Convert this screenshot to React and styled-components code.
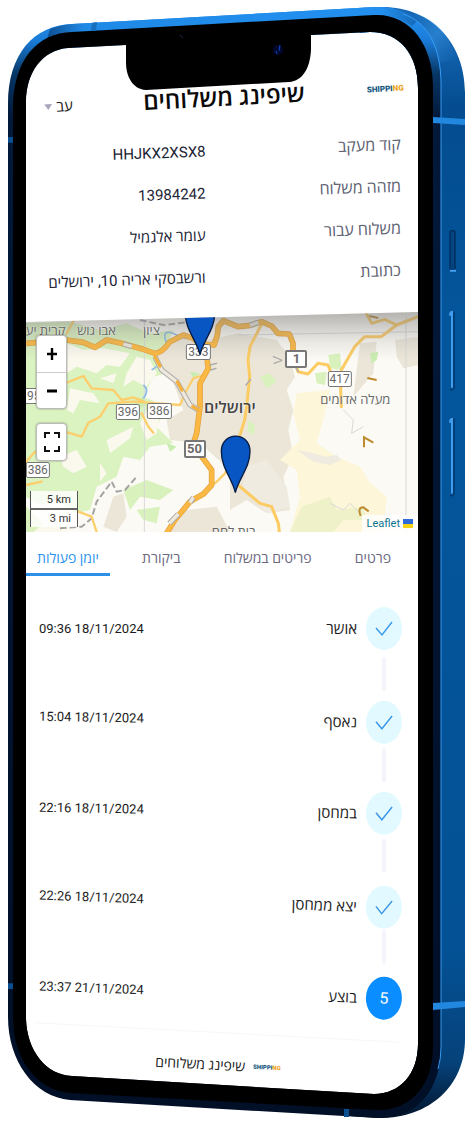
import React from "react";
import styled, { createGlobalStyle } from "styled-components";

const GlobalStyle = createGlobalStyle`
  * { box-sizing: border-box; }
  body { margin: 0; background: #fff; }
  button, select { font: inherit; }
`;

const textFont = `Roboto, "Open Sans", "DejaVu Sans", sans-serif`;

const Phone = styled.main`
  position: relative;
  display: flex;
  flex-direction: column;
  width: 100%;
  padding: 83px 58px 31px 26px;
  font-family: ${textFont};
  color: #1c1c22;
`;

const Frame = styled.svg`
  position: absolute;
  inset: 0;
  width: 100%;
  height: 100%;
  pointer-events: none;
  z-index: 5;
`;

const Header = styled.header`
  padding-bottom: 14px;
`;

const TitleBar = styled.div`
  display: grid;
  grid-template-columns: 1fr auto 1fr;
  align-items: center;
  height: 30px;
  margin-bottom: 17px;
  padding: 0 14px 0 18px;
  transform: rotate(-3deg);
`;

const Language = styled.label`
  display: flex;
  align-items: center;
  gap: 4px;
`;

const LanguageSelect = styled.select`
  appearance: none;
  border: 0;
  padding: 0;
  background: transparent;
  color: #222;
  font-size: 15px;
  line-height: 20px;
`;

const Title = styled.h1`
  margin: 0;
  color: #0a0a0a;
  font-size: 24px;
  line-height: 30px;
  font-weight: 600;
  white-space: nowrap;
`;

const Logo = styled.span`
  justify-self: end;
  direction: ltr;
  color: #14587f;
  font-size: ${(p) => (p.$small ? 6 : 8)}px;
  line-height: 12px;
  font-weight: 900;
  b { color: #f0a325; font-weight: 900; }
`;

const Details = styled.dl`
  margin: 0;
  direction: rtl;
`;

const Detail = styled.div`
  display: grid;
  grid-template-columns: 54% 1fr;
  align-items: center;
  height: 42px;
  padding: 0 17px 0 13px;
  transform: rotate(-2deg);
`;

const DetailName = styled.dt`
  color: #5d6172;
  font-size: 16px;
  line-height: 22px;
`;

const DetailValue = styled.dd`
  margin: 0;
  color: #1a2233;
  font-size: 15px;
  line-height: 22px;
  white-space: nowrap;
`;

const Map = styled.section`
  position: relative;
  height: 220px;
  overflow: hidden;
  background: #f8f5ec;
  clip-path: polygon(0 10px, 100% 0, 100% 100%, 0 100%);
`;

const MapArt = styled.svg`
  position: absolute;
  inset: 0;
  width: 100%;
  height: 100%;
`;

const Place = styled.span`
  position: absolute;
  left: ${(p) => p.$x}%;
  top: ${(p) => p.$y}px;
  transform: translate(-50%, -50%);
  color: ${(p) => (p.$big ? "#444" : "#666")};
  font-size: ${(p) => (p.$big ? 16 : 13)}px;
  line-height: 16px;
  font-weight: ${(p) => (p.$big ? 600 : 500)};
  white-space: nowrap;
  text-shadow: 0 0 2px #fff;
`;

const Shield = styled.span`
  position: absolute;
  left: ${(p) => p.$x}%;
  top: ${(p) => p.$y}px;
  transform: translate(-50%, -50%);
  min-width: ${(p) => (p.$major ? 22 : 20)}px;
  padding: 0 1px;
  border: ${(p) => (p.$major ? 2 : 1)}px solid #777;
  border-radius: 2px;
  background: #fff;
  color: #6a6a6a;
  font-size: ${(p) => (p.$major ? 13 : 12)}px;
  line-height: 14px;
  font-weight: ${(p) => (p.$major ? 700 : 400)};
  text-align: center;
`;

const Controls = styled.div`
  position: absolute;
  top: 23px;
  left: 10px;
  display: flex;
  flex-direction: column;
  gap: 14px;
`;

const ControlGroup = styled.div`
  display: flex;
  flex-direction: column;
  width: 31px;
  border: 1px solid #bbb;
  border-radius: 4px;
  background: #fff;
  box-shadow: 0 0 1px 1px #0002;
`;

const ControlButton = styled.button`
  display: grid;
  place-items: center;
  width: 100%;
  height: 36px;
  padding: 0;
  border: 0;
  background: transparent;
  color: #000;
  & + & { border-top: 1px solid #ccc; }
`;

const Scale = styled.div`
  position: absolute;
  left: 4px;
  bottom: 5px;
  width: 48px;
  border: 1px solid #555;
  border-width: 0 1px;
  background: #fffc;
  color: #333;
  font-size: 11px;
  line-height: 17px;
  text-align: right;
  div { padding-right: 6px; }
  div + div { border-top: 2px solid #666; }
`;

const Attribution = styled.a`
  position: absolute;
  right: 0;
  bottom: 0;
  display: flex;
  align-items: center;
  gap: 3px;
  padding: 0 5px;
  background: #fffc;
  color: #0b7490;
  font-size: 11px;
  line-height: 17px;
  text-decoration: none;
`;

const Tabs = styled.nav`
  display: flex;
  justify-content: space-between;
  height: 44px;
  padding-right: 16px;
  direction: rtl;
`;

const Tab = styled.button`
  height: 44px;
  padding: 16px 11px 5px;
  border: 0;
  border-bottom: 3px solid ${(p) => (p.$active ? "#2c8fe8" : "transparent")};
  background: transparent;
  color: ${(p) => (p.$active ? "#2c93ee" : "#6b6880")};
  font-size: 14px;
  line-height: 20px;
  font-weight: ${(p) => (p.$active ? 500 : 400)};
  white-space: nowrap;
`;

const Timeline = styled.ol`
  margin: 31px 0 0;
  padding: 0;
  list-style: none;
  direction: rtl;
`;

const Step = styled.li`
  &:not(:last-child)::after {
    content: "";
    display: block;
    width: 4px;
    height: 34px;
    margin: 7px 32px 7px 0;
    border-radius: 2px;
    background: #f5f4fd;
  }
`;

const StepRow = styled.div`
  display: flex;
  align-items: center;
  gap: 9px;
  height: 43px;
  padding: 0 16px 0 13px;
  transform: rotate(${(p) => p.$tilt}deg);
`;

const Badge = styled.span`
  display: grid;
  place-items: center;
  width: 36px;
  height: 43px;
  border-radius: 50%;
  background: ${(p) => (p.$current ? "#0a8dff" : "#e2faff")};
  color: #fff;
  font-size: 16px;
`;

const StepName = styled.span`
  flex: 1;
  font-size: 15px;
  line-height: 22px;
`;

const StepTime = styled.time`
  direction: ltr;
  font-size: 13px;
  line-height: 22px;
`;

const Footer = styled.footer`
  margin: 18px 16px 0 8px;
`;

const FooterRule = styled.hr`
  margin: 0;
  border: 0;
  border-top: 1px solid #f7f7f8;
  transform: rotate(3deg);
`;

const FooterBrand = styled.div`
  display: flex;
  align-items: center;
  justify-content: center;
  gap: 8px;
  height: 64px;
  direction: rtl;
  font-size: 14px;
  line-height: 22px;
  transform: rotate(3deg);
`;

const details = [
  { name: "קוד מעקב", value: "HHJKX2XSX8" },
  { name: "מזהה משלוח", value: "13984242" },
  { name: "משלוח עבור", value: "עומר אלגמיל" },
  { name: "כתובת", value: "ורשבסקי אריה 10, ירושלים" },
];

const places = [
  { text: "קרית יע", x: 5, y: 19 },
  { text: "אבו גוש", x: 18, y: 19 },
  { text: "ציון", x: 32, y: 19 },
  { text: "ירושלים", x: 52, y: 96, big: true },
  { text: "מעלה אדומים", x: 84, y: 88 },
  { text: "בית לחם", x: 53, y: 220 },
];

const shields = [
  { text: "333", x: 44, y: 40 },
  { text: "1", x: 69, y: 47, major: true },
  { text: "417", x: 80, y: 67 },
  { text: "95", x: 2, y: 84 },
  { text: "396", x: 26, y: 100 },
  { text: "386", x: 34, y: 99 },
  { text: "50", x: 43, y: 137, major: true },
  { text: "386", x: 3, y: 158 },
];

const steps = [
  { name: "אושר", time: "09:36 18/11/2024", tilt: 0 },
  { name: "נאסף", time: "15:04 18/11/2024", tilt: 1 },
  { name: "במחסן", time: "22:16 18/11/2024", tilt: 1 },
  { name: "יצא ממחסן", time: "22:26 18/11/2024", tilt: 2 },
  { name: "בוצע", time: "23:37 21/11/2024", tilt: 2, current: true },
];

const tabs = ["פרטים", "פריטים במשלוח", "ביקורת", "יומן פעולות"];

function Brand({ small }) {
  return <Logo $small={small}>SHIPPI<b>NG</b></Logo>;
}

function PhoneFrame() {
  return (
    <Frame viewBox="0 0 476 1129" preserveAspectRatio="none" aria-hidden="true">
      <defs>
        <linearGradient id="side" x1="0" y1="0" x2="0" y2="1">
          <stop offset="0" stopColor="#1668b5" />
          <stop offset=".05" stopColor="#0e5ca6" />
          <stop offset=".09" stopColor="#044c8f" />
          <stop offset=".3" stopColor="#03569c" />
          <stop offset=".85" stopColor="#045195" />
          <stop offset=".95" stopColor="#06427a" />
          <stop offset="1" stopColor="#02152c" />
        </linearGradient>
        <linearGradient id="rim" x1="0" y1="0" x2="0" y2="1">
          <stop offset="0" stopColor="#2693f2" />
          <stop offset=".03" stopColor="#1a7cd8" />
          <stop offset=".06" stopColor="#073766" />
          <stop offset=".1" stopColor="#02193a" />
          <stop offset="1" stopColor="#010f27" />
        </linearGradient>
        <linearGradient id="top" x1="0" y1="0" x2="1" y2="0">
          <stop offset="0" stopColor="#0d4f92" />
          <stop offset=".1" stopColor="#1f89e6" />
          <stop offset=".9" stopColor="#2390f0" />
          <stop offset="1" stopColor="#1668b5" />
        </linearGradient>
        <linearGradient id="shine" x1="0" y1="0" x2="1" y2="1">
          <stop offset="0" stopColor="#2d96ee" stopOpacity="0" />
          <stop offset=".5" stopColor="#3d9eed" stopOpacity=".5" />
          <stop offset="1" stopColor="#2d86d6" stopOpacity="0" />
        </linearGradient>
      </defs>
      <path fill="url(#side)" fillRule="evenodd" d="M360 8L378 7C432 5 465 44 465 92V1040C465 1088 428 1120 378 1119L350 1117L350 1095L378 1095C400 1095 418 1075 418 1045V88C418 55 400 32 370 32L360 33Z" />
      <path fill="url(#shine)" d="M416 13Q446 24 458 60L440 62Q432 34 408 16Z" />
      <path fill="url(#rim)" fillRule="evenodd" d="M8 104C8 54 34 25 72 24L375 7C418 5 441 40 441 85V1048C441 1092 416 1120 378 1119L70 1101C34 1098 8 1062 8 1018ZM26 102V1020C27 1052 46 1076 72 1077L374 1095C400 1095 418 1075 418 1045V88C418 55 400 32 370 32L68 48C42 50 26 73 26 102Z" />
      <path fill="url(#top)" d="M50 29Q60 25 72 24L375 7Q400 6 418 20L412 26Q396 14 374 15L72 32Q60 33 47 39Z" />
      <path fill="#000" fillRule="evenodd" d="M13 106C14 60 37 33 72 32L374 15C410 13 433 45 433 86V1047C433 1086 411 1112 377 1111L70 1094C36 1091 13 1060 13 1018ZM26 102V1020C27 1052 46 1076 72 1077L374 1095C400 1095 418 1075 418 1045V88C418 55 400 32 370 32L311 35V50C310 68 303 81 289 82L146 90C132 89 126 76 126 62V45L68 48C42 50 26 73 26 102Z" />
      <path fill="none" stroke="#369bf5" strokeWidth="1" d="M403 14C428 22 441 48 441 84V1048Q441 1060 438 1070" />
      <path fill="#2287df" d="M433 117L465 119V125L433 123ZM433 1004L465 1002V1008L433 1011Z" />
      <path fill="#0a4f8f" d="M8 137H13V143H8ZM8 984H13V990H8ZM344 1110H349V1118H344Z" />
      <path fill="#176fbc" d="M92 23L97 22L96 31H91Z" />
      <g fill="none">
        <rect x="450" y="231" width="5" height="39" rx="1" fill="#034583" stroke="#012248" />
        <path stroke="#44a0f0" strokeWidth="2" d="M450 271H456" />
        <path stroke="#022b58" d="M450 313Q450 311 452 311M454 312V389Q453 391 450 390M450 420Q450 418 452 418M454 419V495Q453 497 450 496" />
        <path stroke="#419cec" strokeWidth="2" d="M450 316Q450 312 452 312V388M450 423Q450 419 452 419V494" />
      </g>
      <circle cx="278" cy="50" r="5" fill="#02072e" />
      <path stroke="#0949c5" strokeWidth="1" d="M280 45L279 51M276 51L277 54" />
      <path stroke="#1d2a48" strokeWidth="1" d="M180 35L183 38" />
    </Frame>
  );
}

const highway = "M78 100L200 90L250 97L285 112L320 90L365 100L430 118L465 130Q485 130 510 95L550 75L580 85L600 102L642 105L652 75L655 50L670 32L714 50L750 46L785 35L815 48L834 70L868 72L879 100L879 125M622 155L625 175L600 220L600 290L590 370L580 400L605 440L635 480L635 525L610 552L570 575L525 630L502 666";
const tunnels = "M465 140L485 180L530 215L570 285L595 300M370 102L395 109M508 640L535 612M570 578L580 562M750 46L775 37";

function MapDrawing() {
  return (
    <MapArt viewBox="78 6 1176 660" preserveAspectRatio="none" aria-hidden="true">
      <defs>
        <linearGradient id="fade" x1="0" y1="0" x2="0" y2="1">
          <stop offset="0" stopColor="#777" stopOpacity=".55" />
          <stop offset=".14" stopColor="#888" stopOpacity=".15" />
          <stop offset=".22" stopColor="#999" stopOpacity="0" />
        </linearGradient>
      </defs>
      <rect x="78" y="6" width="1176" height="660" fill="#fcfaf4" />
      <path fill="#dbf2c1" d="M78 40L210 35L300 60L380 40L450 70L520 60L500 110L540 180L460 200L430 260L500 290L470 350L520 400L450 410L420 450L370 440L350 500L290 530L270 600L180 620L78 560Z" />
      <path fill="#fbf9ee" d="M200 100L250 120L310 115L390 130L360 170L320 165L290 190L230 170L200 190ZM210 235L280 250L300 280L240 270L220 310L200 300ZM300 205L350 190L340 220ZM180 440L230 420L260 470L220 490L190 470ZM320 390L400 350L390 385L330 430ZM300 460L320 490L300 515ZM110 590L170 570L220 600L200 666L78 666V620ZM410 140L450 150L470 190L440 230L400 210L370 230L380 190ZM440 300L480 310L470 370L440 390L420 340Z" />
      <path fill="#d9f1bd" d="M78 590L130 640L100 666H78ZM370 540L440 510L520 540L480 570L420 560L390 600ZM410 600L480 590L470 640L430 630Z" />
      <path fill="#ece6d9" d="M520 80L600 95L714 70L830 90L870 140L885 200L860 240L880 300L865 360L880 440L850 500L870 600L800 610L740 570L690 600L690 480L600 400L510 390L500 330L550 300L520 220L470 140ZM340 560L370 550L380 620L350 666L310 650ZM560 600L650 590L690 666H510ZM1185 90L1254 80V165L1210 175L1190 140ZM1080 100L1130 95L1120 190L1060 260Z" />
      <path fill="#fdf6d8" d="M890 250L990 240L970 330L950 400L1010 440L1080 470L1110 520L1160 560L1150 666H870L900 560L890 480L840 450L900 390L880 310Z" />
      <path fill="#f0ebe0" d="M740 470L800 450L860 530L870 590L800 610L730 530ZM890 420L940 430L975 440L1010 435L1025 450L990 465L940 455Z" />
      <path fill="#d9f2bd" d="M780 200L810 190L830 215L800 235ZM745 330L765 345L762 375L742 365ZM985 135L1020 130L1025 180L990 175ZM945 190L980 185L975 225L950 220Z" />
      <path fill="#eff2c8" d="M905 590L990 560L1010 600L1090 590L1100 630L1030 630L1000 666H870Z" />
      <path fill="#c9edb0" d="M400 275L430 260L440 285L420 295ZM1110 130L1135 125L1130 150L1115 160ZM500 400L530 410L510 425ZM570 185L600 190L580 205Z" />
      <g fill="none" stroke="#d8d8d8" strokeWidth="3">
        <path d="M433 30V666M1218 20V666M714 75L1254 65" />
        <path d="M1030 300L1060 330L1055 370L1090 350M990 580L1030 600L1050 580L1080 610" />
      </g>
      <path fill="none" stroke="#8bbcea" strokeWidth="5" d="M500 100Q480 50 530 75T590 65M430 225Q450 240 430 265M455 180L470 170" />
      <path fill="none" stroke="#a3a3a3" strokeWidth="6" strokeDasharray="20 9" d="M180 655L245 650L275 625L290 575L335 515L350 545L375 540L410 500M420 30L490 45L560 37" />
      <g fill="none" strokeLinejoin="round" strokeLinecap="round">
        <path stroke="#fccf6c" strokeWidth="7" d="M190 222L250 198L275 235L340 240L365 270L400 262L432 275M195 365L245 380L265 338L300 320L325 280L400 275L540 285L560 240L580 205L612 195M425 310L445 350L460 368M78 455L105 425M78 525L125 515M235 605L275 620L290 666M200 70L222 30M645 520L675 490L685 470" />
        <path stroke="#fccb62" strokeWidth="9" d="M786 40L750 110L744 150L749 200L740 290L734 330L720 375M714 525L780 580L815 590L835 640L838 666M1024 290L1022 240L1024 180L1064 110L1094 80L1144 80L1190 45L1254 20M1099 10L1115 40L1154 28L1190 45M879 130L894 185L924 192L954 160L984 165L1000 205" />
        <path stroke="#e0a03e" strokeWidth="17" d={highway} />
        <path stroke="#fbb842" strokeWidth="13" d={highway} />
        <path stroke="#aaa" strokeWidth="16" strokeLinecap="butt" d={tunnels} />
        <path stroke="#eee9dc" strokeWidth="10" strokeLinecap="butt" d={tunnels} />
        <path stroke="#f5b13c" strokeWidth="10" d="M465 140L480 168M532 216L546 240M578 290L595 300" />
        <path stroke="#aaa" strokeWidth="4" d="M630 165L650 160M632 180L648 175M820 140L845 150M822 160L845 152M738 225L752 208M885 170L895 185" />
      </g>
      <path fill="none" stroke="#bd8a2f" strokeWidth="6" d="M1102 204L1130 210M1092 412V382L1120 398M1082 618Q1072 592 1090 592L1106 604M1108 18L1135 24" />
      <rect x="78" y="6" width="1176" height="660" fill="url(#fade)" />
    </MapArt>
  );
}

function MapPins() {
  return (
    <MapArt viewBox="78 6 1176 660" preserveAspectRatio="none" aria-hidden="true">
      <g fill="#0756c4" stroke="#071b40" strokeWidth="4">
        <path d="M600 134C590 90 556 60 556 10C556-45 644-45 644 10C644 60 610 90 600 134Z" />
        <path d="M706 548C696 504 664 474 664 424C664 363 750 363 750 424C750 474 716 504 706 548Z" />
      </g>
    </MapArt>
  );
}

export default function App() {
  return (
    <Phone lang="he">
      <GlobalStyle />
      <Header>
        <TitleBar>
          <Language>
            <svg width="8" height="6" viewBox="0 0 8 6" aria-hidden="true"><path d="M0 0H8L4 6Z" fill="#aaa6bd" /></svg>
            <LanguageSelect aria-label="שפה" defaultValue="he"><option value="he">עב</option></LanguageSelect>
          </Language>
          <Title dir="rtl">שיפינג משלוחים</Title>
          <Brand />
        </TitleBar>
        <Details>
          {details.map((d) => (
            <Detail key={d.name}>
              <DetailName>{d.name}</DetailName>
              <DetailValue>{d.value}</DetailValue>
            </Detail>
          ))}
        </Details>
      </Header>
      <Map aria-label="מפה">
        <MapDrawing />
        {places.map((p) => <Place key={p.text} dir="rtl" $x={p.x} $y={p.y} $big={p.big}>{p.text}</Place>)}
        {shields.map((s) => <Shield key={s.text + s.x} $x={s.x} $y={s.y} $major={s.major}>{s.text}</Shield>)}
        <MapPins />
        <Controls>
          <ControlGroup>
            <ControlButton aria-label="הגדלה">
              <svg width="12" height="14" viewBox="0 0 12 14"><path d="M6 1V13M1 7H11" stroke="#000" strokeWidth="2.4" /></svg>
            </ControlButton>
            <ControlButton aria-label="הקטנה">
              <svg width="12" height="14" viewBox="0 0 12 14"><path d="M1 7H11" stroke="#000" strokeWidth="2.8" /></svg>
            </ControlButton>
          </ControlGroup>
          <ControlGroup>
            <ControlButton aria-label="מסך מלא">
              <svg width="16" height="20" viewBox="0 0 16 20"><path d="M1 6V1H6M10 1H15V6M15 14V19H10M6 19H1V14" fill="none" stroke="#111" strokeWidth="2" /></svg>
            </ControlButton>
          </ControlGroup>
        </Controls>
        <Scale><div>5 km</div><div>3 mi</div></Scale>
        <Attribution href="#leaflet">
          Leaflet
          <svg width="10" height="9" viewBox="0 0 10 9" aria-hidden="true"><path fill="#2f6ad9" d="M0 0H10V5H0Z" /><path fill="#f5d417" d="M0 5H10V9H0Z" /></svg>
        </Attribution>
      </Map>
      <Tabs>
        {tabs.map((t, i) => <Tab key={t} $active={i === 3}>{t}</Tab>)}
      </Tabs>
      <Timeline>
        {steps.map((s, i) => (
          <Step key={s.name}>
            <StepRow $tilt={s.tilt}>
              <Badge $current={s.current}>
                {s.current ? i + 1 : (
                  <svg width="18" height="16" viewBox="0 0 18 16" aria-hidden="true"><path d="M1 7L7 14L17 1" fill="none" stroke="#3a97e8" strokeWidth="1.4" /></svg>
                )}
              </Badge>
              <StepName>{s.name}</StepName>
              <StepTime>{s.time}</StepTime>
            </StepRow>
          </Step>
        ))}
      </Timeline>
      <Footer>
        <FooterRule />
        <FooterBrand><Brand small />שיפינג משלוחים</FooterBrand>
      </Footer>
      <PhoneFrame />
    </Phone>
  );
}
